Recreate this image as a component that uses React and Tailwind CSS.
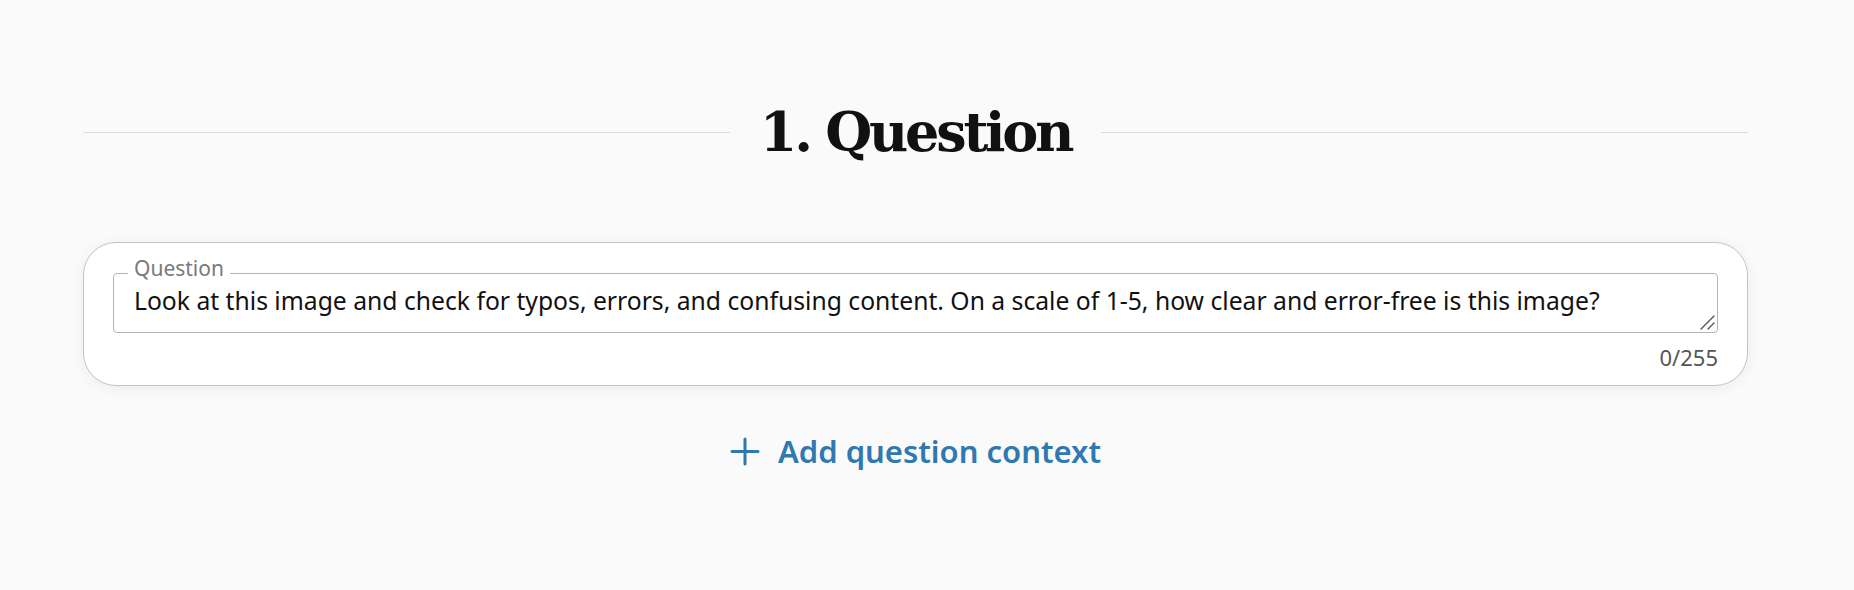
import React from "react";

const QuestionStep = () => {
  return (
    <div className="min-h-[590px] w-full bg-[#fafafa] pt-[100px]" style={{ fontFamily: "'Noto Sans', sans-serif" }}>
      <div className="ml-[83px] w-[1665px]">
        {/* heading with side rules */}
        <div className="flex items-center">
          <div className="h-px flex-1 bg-[#dcdcdc]" />
          <h1
            className="px-[30px] text-[54px] font-bold leading-[64px] tracking-[-0.06em] text-[#111]"
            style={{ fontFamily: "'DejaVu Serif', serif" }}
          >
            1. Question
          </h1>
          <div className="h-px flex-1 bg-[#dcdcdc]" />
        </div>

        {/* question card */}
        <div className="mt-[78px] rounded-[33px] border border-[#c4c4c4] bg-white px-[29px] pt-[30px] pb-[13px] shadow-[0_2px_14px_rgba(0,0,0,0.06)]">
          <div className="relative">
            <span className="absolute -top-[17px] left-[15px] bg-white px-[6px] text-[21px] leading-[24px] text-[#7a7a7a]">
              Question
            </span>
            <textarea
              readOnly
              rows={1}
              placeholder="Look at this image and check for typos, errors, and confusing content. On a scale of 1-5, how clear and error-free is this image?"
              className="block h-[60px] w-full resize-none rounded-[4px] border border-[#b5b5b5] bg-white px-[20px] pt-[11px] text-[24.7px] leading-[32px] text-[#111] outline-none placeholder:text-[#111]"
            />
            {/* resize grip */}
            <svg
              className="pointer-events-none absolute right-[3px] bottom-[3px]"
              width="16"
              height="15"
              viewBox="0 0 16 15"
              fill="none"
              stroke="#555"
              strokeWidth="1.4"
              strokeLinecap="round"
            >
              <path d="M15 1L2 14M15 8L9 14" />
            </svg>
          </div>
          <div className="mt-[9px] text-right text-[22px] leading-[30px] text-[#555]">0/255</div>
        </div>

        {/* add context */}
        <div className="mt-[45px] flex justify-center">
          <button className="flex items-center gap-[18px] text-[31px] font-semibold leading-[40px] text-[#3079b0]">
            <svg width="30" height="30" viewBox="0 0 30 30" fill="none" stroke="currentColor" strokeWidth="3" strokeLinecap="round">
              <path d="M15 3v25M2 15.5h26" />
            </svg>
            <span>Add question context</span>
          </button>
        </div>
      </div>
    </div>
  );
};

export default function App() {
  return <QuestionStep />;
}
